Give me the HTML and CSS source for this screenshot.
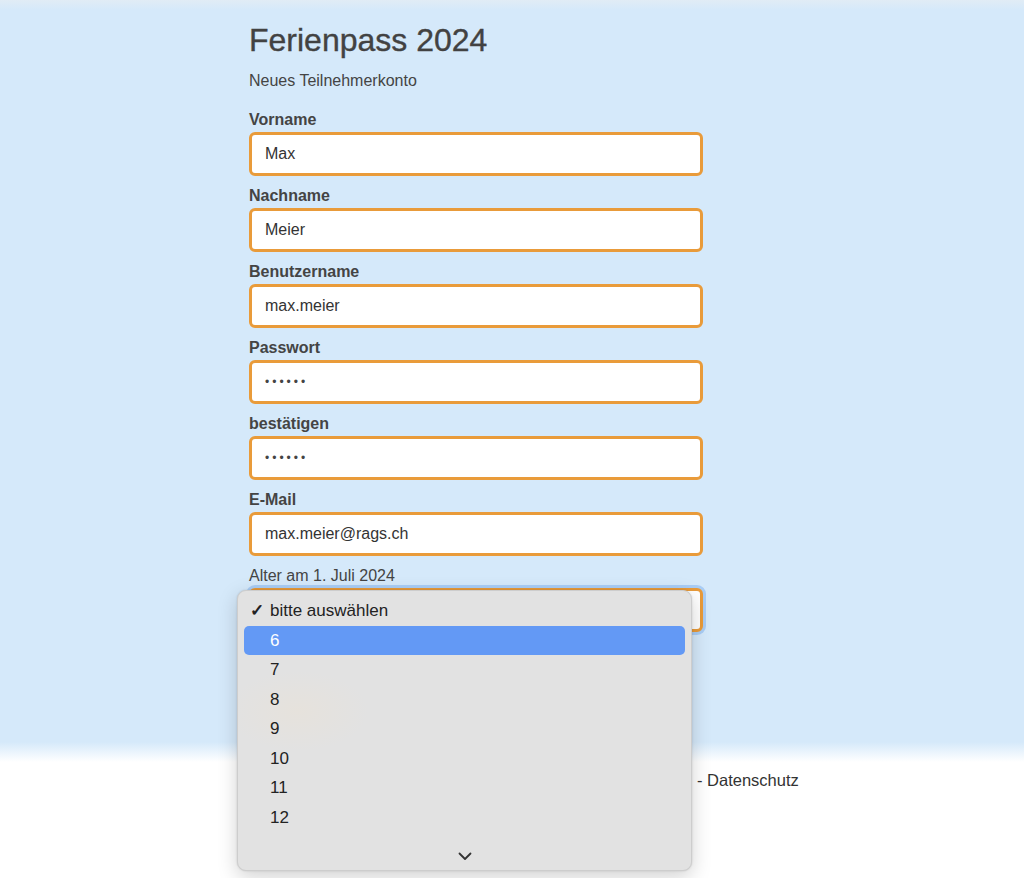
FILE: index.html
```html
<!DOCTYPE html>
<html lang="de">
<head>
<meta charset="utf-8">
<title>Ferienpass 2024</title>
<link rel="stylesheet" href="styles.css">
</head>
<body>
<div class="page">
  <main class="band">
    <div class="column">
      <h1 class="title">Ferienpass 2024</h1>
      <p class="subtitle">Neues Teilnehmerkonto</p>
      <form class="form">
        <div class="field">
          <label class="label">Vorname</label>
          <div class="input">Max</div>
        </div>
        <div class="field">
          <label class="label">Nachname</label>
          <div class="input">Meier</div>
        </div>
        <div class="field">
          <label class="label">Benutzername</label>
          <div class="input">max.meier</div>
        </div>
        <div class="field">
          <label class="label">Passwort</label>
          <div class="input dots">••••••</div>
        </div>
        <div class="field">
          <label class="label">bestätigen</label>
          <div class="input dots">••••••</div>
        </div>
        <div class="field">
          <label class="label">E-Mail</label>
          <div class="input">max.meier@rags.ch</div>
        </div>
        <div class="field">
          <label class="label plain">Alter am 1. Juli 2024</label>
          <div class="select-wrap">
            <div class="input select"><span class="caret">⌄</span></div>
            <div class="menu">
              <div class="option checked"><span class="check">✓</span>bitte auswählen</div>
              <div class="option active">6</div>
              <div class="option">7</div>
              <div class="option">8</div>
              <div class="option">9</div>
              <div class="option">10</div>
              <div class="option">11</div>
              <div class="option">12</div>
              <div class="more">
                <svg width="14" height="9" viewBox="0 0 14 9"><path d="M1.5 1.5 L7 7 L12.5 1.5" fill="none" stroke="#333" stroke-width="1.8" stroke-linecap="round" stroke-linejoin="round"/></svg>
              </div>
            </div>
          </div>
        </div>
      </form>
    </div>
  </main>
  <footer class="footer">
    <span class="foot-text">- Datenschutz</span>
  </footer>
</div>
</body>
</html>
```
FILE: styles.css
```css
* { box-sizing: border-box; }
html, body {
  margin: 0;
  padding: 0;
  background: #ffffff;
  font-family: "Liberation Sans", Arial, sans-serif;
  color: #444;
}
.page {
  min-height: 878px;
}
.band {
  background: linear-gradient(to bottom, #e1ecf5 0px, #d5e9fa 10px, #d5e9fa 742px, #ffffff 762px);
  height: 762px;
  padding-top: 22px;
}
.column {
  width: 454px;
  margin-left: 249px;
}
.title {
  margin: 0;
  font-size: 32px;
  font-weight: 400;
  line-height: 36px;
  color: #424242;
  -webkit-text-stroke: 0.35px #424242;
}
.subtitle {
  margin: 13px 0 0 0;
  font-size: 16px;
  line-height: 20px;
  color: #444;
}
.form {
  margin-top: 19px;
  display: flex;
  flex-direction: column;
  gap: 10px;
}
.field {
  display: flex;
  flex-direction: column;
  gap: 3px;
}
.label {
  font-size: 16px;
  font-weight: 700;
  line-height: 19px;
  color: #444;
}
.label.plain {
  font-weight: 400;
}
.input {
  height: 44px;
  border: 3px solid #e99b3a;
  border-radius: 6px;
  background: #fff;
  padding: 0 13px;
  font-size: 16px;
  line-height: 38px;
  color: #333;
}
.dots {
  font-size: 12px;
  letter-spacing: 3px;
  color: #444;
}
.select-wrap {
  position: relative;
}
.select {
  box-shadow: 0 0 0 3px #a9cdf5;
  display: flex;
  justify-content: flex-end;
  padding-right: 6px;
  color: #333;
}
.caret {
  font-size: 12px;
}
.menu {
  position: absolute;
  left: -12px;
  top: 2px;
  width: 455px;
  height: 281px;
  background: radial-gradient(ellipse 70px 40px at 60px 120px, #e6e2dc, rgba(227,227,227,0)), #e2e2e2;
  border: 1px solid #cdcdcd;
  border-radius: 9px;
  box-shadow: 0 6px 20px rgba(0,0,0,0.18), 0 0 2px rgba(0,0,0,0.15);
  padding: 5px 6px 0 6px;
}
.option {
  height: 29.5px;
  line-height: 29.5px;
  padding-left: 26px;
  font-size: 17px;
  color: #222;
  border-radius: 5px;
  position: relative;
}
.check {
  position: absolute;
  left: 6px;
  top: 0;
  font-size: 17px;
  font-weight: 700;
  color: #222;
}
.option.active {
  background: #6399f5;
  color: #fff;
}
.more {
  display: flex;
  justify-content: center;
  padding-top: 20px;
}
.footer {
  padding-top: 9px;
  padding-left: 697px;
  font-size: 16.5px;
  color: #333;
}
```
